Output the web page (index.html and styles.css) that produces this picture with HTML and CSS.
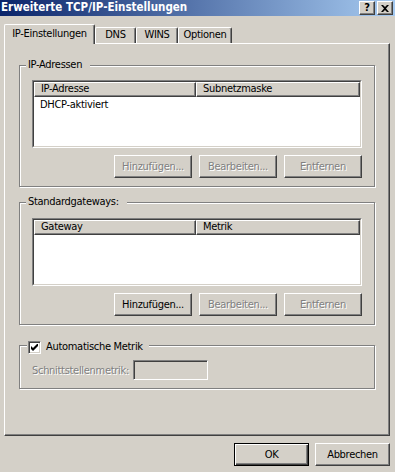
FILE: index.html
```html
<!DOCTYPE html>
<html lang="de">
<head>
<meta charset="utf-8">
<title>Erweiterte TCP/IP-Einstellungen</title>
<link rel="stylesheet" href="styles.css">
</head>
<body>
<div class="titlebar">
  <span class="title">Erweiterte TCP/IP-Einstellungen</span>
  <div class="tb-buttons">
    <span class="tb-btn tb-help">?</span>
    <span class="tb-btn"><svg width="8" height="7" viewBox="0 0 8 7"><path d="M0 0h2l2 2 2-2h2L5 3.5 8 7H6L4 5 2 7H0l3-3.5z" fill="#000"/></svg></span>
  </div>
</div>
<div class="tabs">
  <div class="tab active">IP-Einstellungen</div>
  <div class="tab t-dns">DNS</div>
  <div class="tab t-wins">WINS</div>
  <div class="tab t-opt">Optionen</div>
</div>
<div class="panel">
  <div class="group g1">
    <span class="group-label">IP-Adressen</span>
    <div class="list">
      <div class="list-inner">
        <div class="list-head"><span class="col c1">IP-Adresse</span><span class="col c2">Subnetzmaske</span></div>
        <div class="row">DHCP-aktiviert</div>
      </div>
    </div>
    <div class="btn-row">
      <button class="btn disabled">Hinzufügen...</button>
      <button class="btn disabled">Bearbeiten...</button>
      <button class="btn disabled">Entfernen</button>
    </div>
  </div>
  <div class="group g2">
    <span class="group-label">Standardgateways:</span>
    <div class="list">
      <div class="list-inner">
        <div class="list-head"><span class="col c1">Gateway</span><span class="col c2">Metrik</span></div>
      </div>
    </div>
    <div class="btn-row">
      <button class="btn">Hinzufügen...</button>
      <button class="btn disabled">Bearbeiten...</button>
      <button class="btn disabled">Entfernen</button>
    </div>
  </div>
  <div class="group g3">
    <label class="group-label check-label"><span class="checkbox"><svg width="7" height="7" viewBox="0 0 7 7"><path d="M0 2v3l2 2 5-5V-1L2 4z" fill="#000"/></svg></span>Automatische Metrik</label>
    <div class="metric-row">
      <span class="disabled-text">Schnittstellenmetrik:</span>
      <span class="input"></span>
    </div>
  </div>
</div>
<div class="footer">
  <button class="btn btn-default">OK</button>
  <button class="btn">Abbrechen</button>
</div>
</body>
</html>
```

FILE: styles.css
```css
body {
  margin: 0;
  width: 395px;
  height: 472px;
  overflow: hidden;
  background: #D4D0C8;
  color: #000;
  font-family: "DejaVu Sans Condensed", "Liberation Sans", sans-serif;
  font-size: 11px;
  letter-spacing: -0.3px;
}

.titlebar {
  height: 16px;
  display: flex;
  justify-content: space-between;
  background: linear-gradient(to right, #0A246A, #A6CAF0);
}

.title {
  color: #fff;
  font-weight: bold;
  font-size: 11.5px;
  letter-spacing: 0;
  line-height: 15px;
  padding-left: 1px;
}

.tb-buttons {
  display: flex;
  gap: 2px;
  margin: 1px 2px 0 0;
}

.tb-btn {
  width: 16px;
  height: 14px;
  box-sizing: border-box;
  background: #D4D0C8;
  border: 1px solid;
  border-color: #fff #404040 #404040 #fff;
  box-shadow: inset -1px -1px 0 #808080;
  display: flex;
  align-items: center;
  justify-content: center;
}

.tb-help {
  font-weight: bold;
  font-size: 11px;
  line-height: 12px;
}

.tabs {
  margin: 8px 0 0 4px;
  height: 19px;
  display: flex;
  align-items: flex-end;
}

.tab {
  height: 16px;
  box-sizing: border-box;
  border-top: 1px solid #fff;
  border-left: 1px solid #fff;
  border-right: 1px solid #404040;
  border-radius: 2px 2px 0 0;
  box-shadow: inset -1px 0 0 #808080;
  text-align: center;
  line-height: 14px;
  background: #D4D0C8;
}

.tab.active {
  height: 20px;
  width: 91px;
  margin-bottom: -1px;
  position: relative;
  z-index: 1;
  line-height: 17px;
}

.t-dns { width: 41px; }
.t-wins { width: 42px; }
.t-opt { width: 54px; }

.panel {
  margin-left: 4px;
  width: 386px;
  height: 393px;
  box-sizing: border-box;
  border: 1px solid;
  border-color: #fff #404040 #404040 #fff;
  box-shadow: inset -1px -1px 0 #808080;
  padding: 21px 0 0 14px;
}

.group {
  position: relative;
  width: 356px;
  box-sizing: border-box;
  border: 1px solid #808080;
  box-shadow: 1px 1px 0 #fff, inset 1px 1px 0 #fff;
  padding: 14px 0 0 12px;
}

.g1 { height: 122px; }
.g2 { height: 123px; margin-top: 15px; padding-top: 15px; }
.g3 { height: 44px; margin-top: 20px; padding-top: 14px; }

.group-label {
  position: absolute;
  top: -8px;
  left: 6px;
  padding: 0 8px 0 2px;
  background: #D4D0C8;
  line-height: 14px;
}

.check-label {
  display: flex;
  align-items: center;
  gap: 5px;
  top: -6px;
  left: 7px;
  padding: 0 6px 0 1px;
}

.checkbox {
  width: 13px;
  height: 13px;
  box-sizing: border-box;
  border: 1px solid;
  border-color: #808080 #fff #fff #808080;
  box-shadow: inset 1px 1px 0 #404040, inset -1px -1px 0 #D4D0C8;
  background: #fff;
  display: flex;
  align-items: center;
  justify-content: center;
}

.list {
  width: 330px;
  height: 68px;
  box-sizing: border-box;
  border: 1px solid;
  border-color: #808080 #fff #fff #808080;
}

.list-inner {
  height: 100%;
  box-sizing: border-box;
  border: 1px solid;
  border-color: #404040 #D4D0C8 #D4D0C8 #404040;
  background: #fff;
}

.list-head {
  display: flex;
  height: 15px;
}

.col {
  box-sizing: border-box;
  height: 15px;
  background: #D4D0C8;
  border: 1px solid;
  border-color: #fff #404040 #404040 #fff;
  box-shadow: inset -1px -1px 0 #808080;
  padding-left: 6px;
  line-height: 12px;
}

.c1 { width: 162px; }
.c2 { flex: 1; }

.row {
  padding: 1px 0 0 6px;
  line-height: 13px;
}

.btn-row {
  width: 330px;
  display: flex;
  justify-content: flex-end;
  gap: 7px;
  margin-top: 7px;
}

.btn {
  width: 78px;
  height: 23px;
  box-sizing: border-box;
  padding: 0;
  background: #D4D0C8;
  border: 1px solid;
  border-color: #fff #404040 #404040 #fff;
  box-shadow: inset -1px -1px 0 #808080;
  font-family: inherit;
  font-size: 11px;
  letter-spacing: inherit;
  color: #000;
}

.btn.disabled,
.disabled-text {
  color: #808080;
  text-shadow: 1px 1px 0 #fff;
}

.metric-row {
  display: flex;
  align-items: center;
  gap: 4px;
}

.input {
  width: 75px;
  height: 20px;
  box-sizing: border-box;
  border: 1px solid;
  border-color: #808080 #fff #fff #808080;
  box-shadow: inset 1px 1px 0 #404040, inset -1px -1px 0 #D4D0C8;
}

.footer {
  margin-top: 7px;
  padding-right: 5px;
  display: flex;
  justify-content: flex-end;
  gap: 6px;
}

.footer .btn { width: 75px; }

.btn-default {
  border: 1px solid #000;
  box-shadow: inset 1px 1px 0 #fff, inset -1px -1px 0 #404040, inset -2px -2px 0 #808080;
}
```
